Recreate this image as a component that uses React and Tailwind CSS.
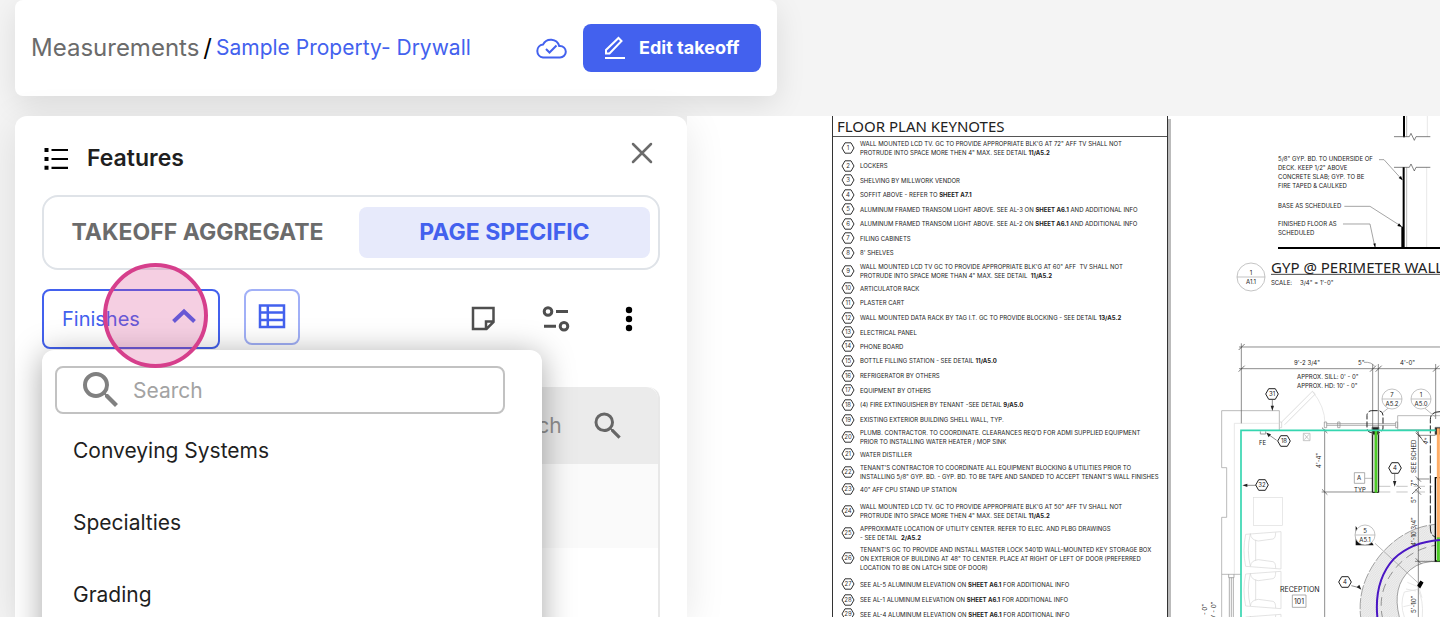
import { MdSearch } from 'react-icons/md';

const NOTES = [
  { h: 20, lines: [['WALL MOUNTED LCD TV. GC TO PROVIDE APPROPRIATE BLK\'G AT 72" AFF TV SHALL NOT'], ['PROTRUDE INTO SPACE MORE THEN 4" MAX. SEE DETAIL ', '11/A5.2']] },
  { h: 15, lines: [['LOCKERS']] },
  { h: 14, lines: [['SHELVING BY MILLWORK VENDOR']] },
  { h: 15, lines: [['SOFFIT ABOVE - REFER TO ', 'SHEET A7.1']] },
  { h: 14, lines: [['ALUMINUM FRAMED TRANSOM LIGHT ABOVE. SEE AL-3 ON ', 'SHEET A6.1', ' AND ADDITIONAL INFO']] },
  { h: 15, lines: [['ALUMINUM FRAMED TRANSOM LIGHT ABOVE. SEE AL-2 ON ', 'SHEET A6.1', ' AND ADDITIONAL INFO']] },
  { h: 14, lines: [['FILING CABINETS']] },
  { h: 15, lines: [["8' SHELVES"]] },
  { h: 21, lines: [['WALL MOUNTED LCD TV GC TO PROVIDE APPROPRIATE BLK\'G AT 60" AFF  TV SHALL NOT'], ['PROTRUDE INTO SPACE MORE THAN 4" MAX. SEE DETAIL  ', '11/A5.2']] },
  { h: 14, lines: [['ARTICULATOR RACK']] },
  { h: 15, lines: [['PLASTER CART']] },
  { h: 15, lines: [['WALL MOUNTED DATA RACK BY TAG I.T. GC TO PROVIDE BLOCKING - SEE DETAIL ', '13/A5.2']] },
  { h: 14, lines: [['ELECTRICAL PANEL']] },
  { h: 14, lines: [['PHONE BOARD']] },
  { h: 15, lines: [['BOTTLE FILLING STATION - SEE DETAIL ', '11/A5.0']] },
  { h: 15, lines: [['REFRIGERATOR BY OTHERS']] },
  { h: 14, lines: [['EQUIPMENT BY OTHERS']] },
  { h: 15, lines: [['(4) FIRE EXTINGUISHER BY TENANT -SEE DETAIL ', '9/A5.0']] },
  { h: 15, lines: [['EXISTING EXTERIOR BUILDING SHELL WALL, TYP.']] },
  { h: 20, lines: [["PLUMB. CONTRACTOR. TO COORDINATE. CLEARANCES REQ'D FOR ADMI SUPPLIED EQUIPMENT"], ['PRIOR TO INSTALLING WATER HEATER / MOP SINK']] },
  { h: 14, lines: [['WATER DISTILLER']] },
  { h: 21, lines: [["TENANT'S CONTRACTOR TO COORDINATE ALL EQUIPMENT BLOCKING & UTILITIES PRIOR TO"], ['INSTALLING 5/8" GYP. BD. - GYP. BD. TO BE TAPE AND SANDED TO ACCEPT TENANT\'S WALL FINISHES']] },
  { h: 14, lines: [['40" AFF CPU STAND UP STATION']] },
  { h: 30, lines: [['WALL MOUNTED LCD TV. GC TO PROVIDE APPROPRIATE BLK\'G AT 50" AFF TV SHALL NOT'], ['PROTRUDE INTO SPACE MORE THEN 4" MAX. SEE DETAIL ', '11/A5.2']] },
  { h: 14, lines: [['APPROXIMATE LOCATION OF UTILITY CENTER. REFER TO ELEC. AND PLBG DRAWINGS'], ['- SEE DETAIL  ', '2/A5.2']] },
  { h: 36, lines: [["TENANT'S GC TO PROVIDE AND INSTALL MASTER LOCK 5401D WALL-MOUNTED KEY STORAGE BOX"], ['ON EXTERIOR OF BUILDING AT 48" TO CENTER. PLACE AT RIGHT OF LEFT OF DOOR (PREFERRED'], ['LOCATION TO BE ON LATCH SIDE OF DOOR)']] },
  { h: 16, lines: [['SEE AL-5 ALUMINUM ELEVATION ON ', 'SHEET A6.1', ' FOR ADDITIONAL INFO']] },
  { h: 15, lines: [['SEE AL-1 ALUMINUM ELEVATION ON ', 'SHEET A6.1', ' FOR ADDITIONAL INFO']] },
  { h: 14, lines: [['SEE AL-4 ALUMINUM ELEVATION ON ', 'SHEET A6.1', ' FOR ADDITIONAL INFO']] },
];

const CATEGORIES = ['Conveying Systems', 'Specialties', 'Grading'];

function Header() {
  return (
    <header className="ml-[15px] flex h-24 w-[762px] shrink-0 items-center rounded-lg bg-white px-4 shadow-[0_8px_30px_rgba(0,0,0,0.1)]">
      <nav className="flex items-center gap-1">
        <a href="#measurements" className="text-2xl text-[#6b6b6b]">Measurements</a>
        <span className="text-2xl text-black">/</span>
        <a href="#sample" className="text-[21px] text-[#4361ee]">Sample Property- Drywall</a>
      </nav>
      <svg className="ml-auto h-6 w-8" viewBox="0 0 32 24" fill="none" stroke="#4361ee" strokeWidth="2">
        <path d="M8 21.500h17a5.800 5.800 0 0 0 0-11.600h-.8A8.700 8.700 0 0 0 8 8.600a6.500 6.500 0 0 0 0 12.900Z" />
        <path d="m11 13 3.500 3.500 7-7" />
      </svg>
      <button type="button" className="ml-4 flex h-12 w-[178px] items-center gap-3 rounded-lg bg-[#4361ee] pl-5 text-lg font-bold text-white">
        <svg className="size-6" viewBox="0 0 24 24" fill="none" stroke="white" strokeWidth="2">
          <path d="M3 17.500V14L15.500 2l3 3L6.500 17.500H3ZM2 22h20" />
        </svg>
        Edit takeoff
      </button>
    </header>
  );
}

function CategoryMenu() {
  return (
    <div className="absolute top-full left-0 z-10 mt-px h-80 w-[500px] rounded-t-xl bg-white px-[13px] pt-4 shadow-[0_4px_32px_rgba(0,0,0,0.35)]">
      <label className="flex h-12 w-[450px] items-center rounded-lg border-2 border-[#c2c2c2] pl-5">
        <MdSearch className="size-12 text-[#808080]" />
        <input type="text" placeholder="Search" aria-label="Search categories" className="ml-2 w-80 pt-0.5 text-[21px] placeholder-[#a3a3a3] outline-none" />
      </label>
      <ul className="pt-px">
        {CATEGORIES.map((name) => (
          <li key={name}>
            <button type="button" className="flex h-[72px] w-full items-center pl-[18px] text-[21px] text-[#1f1f1f]">
              {name}
            </button>
          </li>
        ))}
      </ul>
    </div>
  );
}

function Toolbar() {
  return (
    <div className="mt-[19px] flex items-start">
      <div className="relative">
        <button type="button" className="flex h-[60px] w-[178px] items-center justify-between rounded-lg border-2 border-[#4361ee] px-[18px] text-xl text-[#4361ee]">
          Finishes
          <svg className="size-8" viewBox="0 0 32 32" fill="none" stroke="currentColor" strokeWidth="4">
            <path d="M5.500 18.500 16 8.500l10.500 10" />
          </svg>
        </button>
        <CategoryMenu />
        <span className="pointer-events-none absolute -top-[26px] left-[61px] z-20 size-[105px] rounded-full border-4 border-[#d63f8c] bg-[#d63f8c]/25" />
      </div>
      <button type="button" aria-label="Table view" className="ml-6 flex size-14 items-center justify-center rounded-lg border-2 border-[#a1b0f7]">
        <svg className="size-7" viewBox="0 0 28 28" fill="none" stroke="#4361ee" strokeWidth="2.500">
          <path d="M2 2.500h24v21.500H2ZM9.800 3v21M2 9.500h24M2 17h24" />
        </svg>
      </button>
      <div className="mt-3.5 mr-[15px] ml-auto flex items-center gap-[41px]">
        <button type="button" aria-label="Notes">
          <svg className="size-8" viewBox="0 0 32 32" fill="none" stroke="#4f4f4f" strokeWidth="2.500">
            <path d="M6 5h20.500v14l-7 7H6ZM26 18.500h-7V26" />
          </svg>
        </button>
        <button type="button" aria-label="Filters">
          <svg className="size-8" viewBox="0 0 32 32" fill="none" stroke="#4f4f4f" strokeWidth="3">
            <circle cx="8" cy="8.500" r="3.800" />
            <path d="M16 8.500h12M4 23.200h12" />
            <circle cx="24" cy="23.200" r="3.800" />
          </svg>
        </button>
        <button type="button" aria-label="More">
          <svg className="size-8" viewBox="0 0 32 32">
            <circle cx="16" cy="7" r="3.200" />
            <circle cx="16" cy="16" r="3.200" />
            <circle cx="16" cy="25" r="3.200" />
          </svg>
        </button>
      </div>
    </div>
  );
}

function FeaturesPanel() {
  return (
    <aside className="z-10 ml-[15px] w-[672px] shrink-0 rounded-t-xl bg-white px-[27px] shadow-[0_8px_40px_rgba(0,0,0,0.1)]">
      <div className="flex h-[79px] items-center pt-1.5">
        <svg className="size-7" viewBox="0 0 28 28" stroke="black" strokeWidth="2.200">
          <path d="M2.500 5h4M2.500 14h4M2.500 22.800h4" strokeWidth="4" />
          <path d="M9.500 5h16.500M9.500 14h16.500M9.500 22.800h16.500" />
        </svg>
        <h2 className="ml-[17px] text-[23px] font-semibold text-[#1f1f1f]">Features</h2>
        <button type="button" aria-label="Close" className="mr-1 mb-3 ml-auto">
          <svg className="size-7" viewBox="0 0 28 28" stroke="#6b6b6b" strokeWidth="2.500" strokeLinecap="round">
            <path d="m5 5 18 18M23 5 5 23" />
          </svg>
        </button>
      </div>
      <div className="flex h-[75px] items-center rounded-2xl border-2 border-[#dfe3e8] pr-2">
        <button type="button" className="flex-1 pr-2 text-[23px] font-bold text-[#6b6b6b]">TAKEOFF AGGREGATE</button>
        <button type="button" className="h-[51px] w-[291px] rounded-lg bg-[#e7eafb] text-[23px] font-bold text-[#4361ee]">PAGE SPECIFIC</button>
      </div>
      <Toolbar />
      <div className="mt-[38px] h-80 rounded-t-xl border-r-2 border-[#e8e8e8]">
        <label className="flex h-[77px] items-center justify-end rounded-t-xl bg-[#ebebeb] pr-8">
          <input type="text" placeholder="Search" aria-label="Search features" className="w-[74px] text-[21px] placeholder-[#8f8f8f] outline-none" />
          <MdSearch className="ml-6 size-9 text-[#666]" />
        </label>
        <div className="h-[84px] bg-[#fafafa]" />
      </div>
    </aside>
  );
}

function Keynotes() {
  return (
    <section className="w-[336px] shrink-0 border-x border-[#333] bg-white whitespace-pre text-[#222] shadow-[3px_3px_0_#bbb]">
      <h3 className="h-[21px] border-b border-[#555] pl-1 font-['Noto_Sans',sans-serif] text-[15px] leading-[21px]">FLOOR PLAN KEYNOTES</h3>
      <ol className="pt-px">
        {NOTES.map((note, i) => (
          <li key={i} className="flex items-center pl-2" style={{ height: note.h }}>
            <svg className="h-3 w-3.5 shrink-0" viewBox="0 0 14 12" fill="none" stroke="#333">
              <path d="M1 6 4 .8h6L13 6l-3 5.200H4Z" />
              <text x="7" y="8" textAnchor="middle" fontSize="6" fill="#333" stroke="none">{i + 1}</text>
            </svg>
            <div className="ml-[5px] text-[6px] leading-[9px]">
              {note.lines.map(([lead, sheet, tail]) => (
                <p key={lead}>{lead}{sheet && <b>{sheet}</b>}{tail}</p>
              ))}
            </div>
          </li>
        ))}
      </ol>
    </section>
  );
}

// Round section marker: number over sheet name.
function Marker({ x, y, r = 10, top, sheet }) {
  return (
    <g transform={`translate(${x} ${y})`}>
      <circle r={r} fill="white" stroke="#aaa" strokeWidth=".7" />
      <path d={`M${-r} 0H${r}`} stroke="#aaa" strokeWidth=".7" />
      <text y="-2" textAnchor="middle">{top}</text>
      <text y="7" textAnchor="middle">{sheet}</text>
    </g>
  );
}

function Hex({ x, y, n }) {
  return (
    <g transform={`translate(${x} ${y})`}>
      <path d="M-6.300 0-3.300-5.300h6.600L6.300 0 3.300 5.300h-6.600Z" fill="white" stroke="#222" strokeWidth="1" />
      <text y="2" textAnchor="middle">{n}</text>
    </g>
  );
}

function Armchair({ y }) {
  return (
    <g transform={`translate(161 ${y})`} stroke="#d5d5d5" strokeWidth="2" fill="none">
      <path d="M6 8 112 0v112L6 104Q-4 56 6 8ZM20 6q-12 50 0 98M36 24v64" />
      <path d="M20 6q2 20 24 22l44-6q8-2 8-20M20 104q2-18 24-20l44 6q8 2 8 20" />
    </g>
  );
}

function WallSection() {
  return (
    <g transform="translate(0 -6)">
      <g transform="scale(.33333)" fill="none" stroke="#777" strokeWidth="2">
        <path d="M642 18v64M641 171v243" stroke="black" strokeWidth="6" />
        <path d="M638 350v64" stroke="black" strokeWidth="8" />
        <path d="M650 18v62M650 172v240" stroke="#999" />
        <path d="M712 18v62M710 172v240" stroke="#ddd" />
        <path d="M612 80h46l5-10 10 21 5-11h43M612 172h46l5-10 10 21 5-11h43" stroke="#444" />
        <path d="M567 149h15l56 62M463 289h77l94 60M459 342h81l15 70" />
        <path d="m638 211-12-7 7-6ZM636 351l-14-3 5-8ZM556 413l-6-12 7-1Z" fill="black" stroke="none" />
        <path d="M264 414h486" stroke="black" strokeWidth="6" />
        <path d="M243 493h507" stroke="#444" strokeWidth="3" />
      </g>
      <text x="88" y="51">5/8" GYP. BD. TO UNDERSIDE OF</text>
      <text x="88" y="60">DECK. KEEP 1/2" ABOVE</text>
      <text x="88" y="69">CONCRETE SLAB; GYP. TO BE</text>
      <text x="88" y="78">FIRE TAPED &amp; CAULKED</text>
      <text x="88" y="98">BASE AS SCHEDULED</text>
      <text x="88" y="116">FINISHED FLOOR AS</text>
      <text x="88" y="125">SCHEDULED</text>
      <text x="81" y="163" fontSize="15" fontFamily="Noto Sans, sans-serif">GYP @ PERIMETER WALL</text>
      <text x="81" y="175">SCALE:</text>
      <text x="110" y="175">3/4" = 1'-0"</text>
      <Marker x={61} y={167} r={14} top="1" sheet="A1.1" />
    </g>
  );
}

function FloorPlan() {
  return (
    <g transform="translate(0 224)">
      <g transform="scale(.33333)" fill="none" stroke="#777" strokeWidth="2">
        <defs>
          <pattern id="hatch" width="7" height="7" patternUnits="userSpaceOnUse">
            <rect width="7" height="7" fill="#ededed" stroke="none" />
            <path d="M0 7 7 0" stroke="#d5d5d5" strokeWidth="1.500" />
          </pattern>
        </defs>
        {/* curved reception desk */}
        <path d="M750 552Q650 556 575 640Q500 730 512 831H628Q605 740 660 690Q695 660 750 665Z" fill="url(#hatch)" stroke="none" />
        <path d="M750 552Q650 556 575 640Q500 730 512 831" strokeDasharray="34 5" />
        <path d="M628 831Q605 740 660 690Q695 660 750 665" />
        <path d="M750 614Q675 622 625 675Q560 745 577 831" stroke="#666" strokeDasharray="26 16" />
        <path d="M643 831q-14-40 0-75l40-8q18 30 14 83M652 727l34 14 10 32M648 747l30 6M640 800l36-8" stroke="#ddd" />
        {/* exterior wall, window and door */}
        <path d="M155 212H95v171h15v149H95v171h58M155 212h113v58M95 703v128" stroke="#999" />
        <path d="M133 250v453M133 250h135" stroke="#ddd" />
        <path d="M116 703v10h16v-10M118 713v118M124 713v118M130 713v118" stroke="#888" />
        <path d="M268 246h7v17h-7M275 246l92-92 9 8-92 92" stroke="#ccc" />
        <path d="M367 154q38 45 38 98" stroke="#ddd" />
        <path d="M403 246h7v17h-7ZM443 246h7v17h-7ZM617 246h6v17h-6ZM410 251h207M410 256h207" stroke="#888" />
        <path d="M750 227H623v42h127" stroke="#999" />
        {/* dimension strings */}
        <path d="M154 10v240M147 21h603M147 86h603M548 72v195M565 72v195M737 72v165" stroke="#555" />
        <path d="M146 30l18-18M146 95l18-18M540 95l18-18M557 95l18-18M729 95l18-18" stroke="#333" />
        <path d="M522 67q22-2 32 12" />
        <path d="M404 268v563M395 456h151M685 270v561M675 664h62M686 286h50M680 417h38" stroke="#555" />
        <path d="M396 263l16 16M396 448l16 16M677 278l16 16M677 409l16 16M677 431l16 16M677 448l16 16M677 655l16 16M677 270l26 38M666 462l20-20" stroke="#333" />
        <path d="M567 439h160M567 456h160" stroke="#aaa" strokeDasharray="34 18" />
        <path d="M247 180v20M260 301l-28-20M200 436h-34M614 402v20M484 737l24 6" stroke="#555" />
        <path d="m247 213-5-16h10ZM229 278l14 5-7 9ZM157 436l15-5v10ZM614 440l-5-17h10ZM514 749l-14-7 8-8Z" fill="#222" stroke="none" />
        <path d="M525 415h24M555 610l133 122M629 177l-50 40M705 205l30 25" stroke="#999" />
        <path d="M684 736l8-12 6 4-8 14Z" fill="black" stroke="black" strokeWidth="4" />
        {/* furniture */}
        <rect x="191" y="472" width="86" height="85" stroke="#ddd" />
        <path d="M340 280h20v22h-20ZM343 283l14 16M357 283l-14 16" stroke="#aaa" />
        <path d="M211 274v8h16v-8" stroke="#999" strokeWidth="3" />
        <Armchair y={575} />
        <Armchair y={694} />
        <Armchair y={823} />
        <path d="M493 398h31v32h-31Z M307 765h41v37h-41Z" stroke="#888" />
        {/* interior walls */}
        <rect x="531" y="212" width="48" height="66" rx="14" stroke="#222" strokeWidth="3" strokeDasharray="18 6" />
        <path d="M547 262h19v195h-19Z" fill="#ccc" stroke="black" strokeWidth="3" />
        <path d="M547 262h19v22h-19Z" fill="#222" />
        <path d="M750 215q-29 0-29 24v325q0 26 20 28" stroke="#222" strokeWidth="3" strokeDasharray="24 6" />
        <path d="M735 262h20v22h-20Z" fill="#222" />
        <path d="M736 413h20v250h-20Z" fill="#ddd" stroke="black" strokeWidth="4" />
        {/* takeoff overlays */}
        <path d="M558 270v188" stroke="#4ccb25" strokeWidth="8" />
        <path d="M745 265v330" stroke="#ffad66" strokeWidth="9" />
        <path d="M745 592v72" stroke="#4ccb25" strokeWidth="9" />
        <path d="M750 600Q665 606 612 656Q552 722 562 831" stroke="#4a16c4" strokeWidth="6" />
        <path d="M153 831V271h584" stroke="#35d6b0" strokeWidth="5" />
        <path d="M497 558v58h54l-8-14-36-30Z" fill="#111" stroke="none" />
      </g>
      <text x="104" y="25">9'-2 3/4"</text>
      <text x="168" y="25">5"</text>
      <text x="210" y="25">4'-0"</text>
      <text x="107" y="39">APPROX. SILL: 0' - 0"</text>
      <text x="107" y="48">APPROX. HD: 10' - 0"</text>
      <text x="69" y="105">FE</text>
      <text x="164" y="152">TYP</text>
      <text x="167" y="140">A</text>
      <text x="90" y="252" fontSize="7">RECEPTION</text>
      <text x="104" y="264" fontSize="7">101</text>
      <text transform="translate(131 128) rotate(-90)">4'-4"</text>
      <text transform="translate(226 133) rotate(-90)">SEE SCHED</text>
      <text transform="translate(237 105) rotate(-70)">4"</text>
      <text transform="translate(226 146) rotate(-90)">7"</text>
      <text transform="translate(226 163) rotate(-90)">5"</text>
      <text transform="translate(226 206) rotate(-90)">4'-10 3/4"</text>
      <text transform="translate(226 273) rotate(-90)">5'-10"</text>
      <text transform="translate(17 281) rotate(-90)">1' - 0"</text>
      <text transform="translate(26 280) rotate(-90)">0' - 0"</text>
      <Hex x={82} y={54} n="31" />
      <Hex x={94} y={101} n="18" />
      <Hex x={72} y={145} n="32" />
      <Hex x={205} y={128} n="4" />
      <Hex x={155} y={242} n="4" />
      <Marker x={202} y={59} top="7" sheet="A5.2" />
      <Marker x={231} y={59} top="1" sheet="A5.0" />
      <Marker x={175} y={195} top="5" sheet="A5.1" />
    </g>
  );
}

export default function App() {
  return (
    <div className="flex h-screen flex-col overflow-hidden bg-[#f4f4f4] font-['Inter',sans-serif]">
      <Header />
      <main className="mt-5 flex min-h-0 flex-1">
        <FeaturesPanel />
        <div className="flex flex-1 items-start gap-[22px] overflow-hidden bg-white pl-[145px]">
          <Keynotes />
          <svg className="w-[250px] shrink-0" viewBox="0 0 250 501" fontSize="6" fill="#222" role="img" aria-label="Floor plan">
            <WallSection />
            <FloorPlan />
          </svg>
        </div>
      </main>
    </div>
  );
}
